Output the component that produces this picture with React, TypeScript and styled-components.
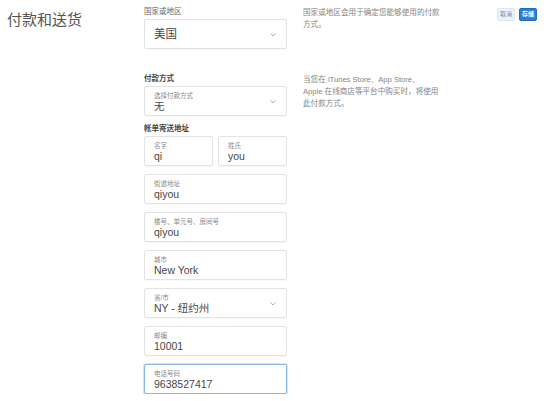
import React from 'react';
import styled, { createGlobalStyle } from 'styled-components';

const GlobalStyle = createGlobalStyle`
  html, body {
    margin: 0;
    padding: 0;
    background: #ffffff;
  }
  body {
    font-family: "Liberation Sans", "Noto Sans CJK SC", sans-serif;
    color: #333333;
  }
`;

const Page = styled.div`
  display: flex;
  align-items: flex-start;
  padding: 7px 16px 0 7px;
  width: 553px;
  box-sizing: border-box;
`;

const PageTitle = styled.h1`
  flex: 0 0 137px;
  margin: 4px 0 0;
  font-size: 15px;
  line-height: 18px;
  font-weight: 400;
  color: #555555;
`;

const Content = styled.div`
  flex: 0 0 auto;
  display: flex;
  flex-direction: column;
`;

const Row = styled.div<{ $gap?: number }>`
  display: flex;
  gap: 16px;
  margin-bottom: ${(p) => p.$gap ?? 0}px;
`;

const FormColumn = styled.div`
  flex: 0 0 143px;
  display: flex;
  flex-direction: column;
  gap: 8px;
`;

const HelpText = styled.p`
  flex: 0 0 160px;
  margin: 0;
  font-size: 7.6px;
  line-height: 12px;
  color: #858585;
`;

const SectionLabel = styled.div<{ $bold?: boolean }>`
  font-size: 7.5px;
  font-weight: ${(p) => (p.$bold ? 700 : 400)};
  color: ${(p) => (p.$bold ? '#444444' : '#666666')};
  line-height: 9px;
  margin-bottom: -5px;
`;

const Field = styled.div<{ $focused?: boolean; $flex?: number; $center?: boolean }>`
  position: relative;
  height: 30px;
  box-sizing: border-box;
  flex: ${(p) => p.$flex ?? 'none'};
  border: 1px solid ${(p) => (p.$focused ? '#86b6e8' : '#e3e3e3')};
  border-radius: 2px;
  box-shadow: ${(p) => (p.$focused ? '0 0 0 1px #d4e6f8' : '0 1px 1px rgba(0,0,0,0.03)')};
  padding: ${(p) => (p.$center ? '0 9px' : '5px 9px 0')};
  display: flex;
  flex-direction: column;
  justify-content: ${(p) => (p.$center ? 'center' : 'flex-start')};
  background: #ffffff;
`;

const FieldLabel = styled.span`
  font-size: 6.5px;
  line-height: 8px;
  color: #8a8a8a;
`;

const FieldValue = styled.span<{ $big?: boolean }>`
  font-size: ${(p) => (p.$big ? '11.5px' : '10.5px')};
  line-height: 13px;
  color: #474747;
`;

const Chevron = styled.svg`
  position: absolute;
  right: 10px;
  top: 50%;
  margin-top: -1px;
  width: 6px;
  height: 4px;
`;

const NameRow = styled.div`
  display: flex;
  gap: 5px;
`;

const Actions = styled.div`
  margin-left: auto;
  display: flex;
  gap: 4px;
  margin-top: 1px;
`;

const Button = styled.button<{ $primary?: boolean }>`
  font-family: inherit;
  font-size: 6px;
  line-height: 9px;
  padding: 1px 2px;
  border-radius: 2px;
  border: 1px solid ${(p) => (p.$primary ? '#1f6fc0' : '#dde5ee')};
  background: ${(p) => (p.$primary ? '#2a7ed4' : '#edf2f7')};
  color: ${(p) => (p.$primary ? '#ffffff' : '#6b8fb5')};
  font-weight: ${(p) => (p.$primary ? 700 : 400)};
  cursor: pointer;
`;

const ChevronIcon = () => (
  <Chevron viewBox="0 0 6 4">
    <path d="M0.5 0.5 L3 3 L5.5 0.5" fill="none" stroke="#9a9a9a" strokeWidth="0.8" />
  </Chevron>
);

const Select: React.FC<{ label?: string; value: string }> = ({ label, value }) => (
  <Field $center={!label}>
    {label && <FieldLabel>{label}</FieldLabel>}
    <FieldValue $big={!label}>{value}</FieldValue>
    <ChevronIcon />
  </Field>
);

const Input: React.FC<{ label: string; value: string; focused?: boolean; flex?: number }> = ({
  label,
  value,
  focused,
  flex,
}) => (
  <Field $focused={focused} $flex={flex}>
    <FieldLabel>{label}</FieldLabel>
    <FieldValue>{value}</FieldValue>
  </Field>
);

const App: React.FC = () => {
  return (
    <>
      <GlobalStyle />
      <Page>
        <PageTitle>付款和送货</PageTitle>
        <Content>
          <Row $gap={25}>
            <FormColumn>
              <SectionLabel>国家或地区</SectionLabel>
              <Select value="美国" />
            </FormColumn>
            <HelpText>
              国家或地区会用于确定您能够使用的付款
              <br />
              方式。
            </HelpText>
          </Row>
          <Row>
            <FormColumn>
              <SectionLabel $bold>付款方式</SectionLabel>
              <Select label="选择付款方式" value="无" />
              <SectionLabel $bold>帐单寄送地址</SectionLabel>
              <NameRow>
                <Input flex={1} label="名字" value="qi" />
                <Input flex={1} label="姓氏" value="you" />
              </NameRow>
              <Input label="街道地址" value="qiyou" />
              <Input label="楼号、单元号、房间号" value="qiyou" />
              <Input label="城市" value="New York" />
              <Select label="省/市" value="NY - 纽约州" />
              <Input label="邮编" value="10001" />
              <Input focused label="电话号码" value="9638527417" />
            </FormColumn>
            <HelpText>
              当您在 iTunes Store、App Store、
              <br />
              Apple 在线商店等平台中购买时，将使用
              <br />
              此付款方式。
            </HelpText>
          </Row>
        </Content>
        <Actions>
          <Button>取消</Button>
          <Button $primary>存储</Button>
        </Actions>
      </Page>
    </>
  );
};

export default App;
